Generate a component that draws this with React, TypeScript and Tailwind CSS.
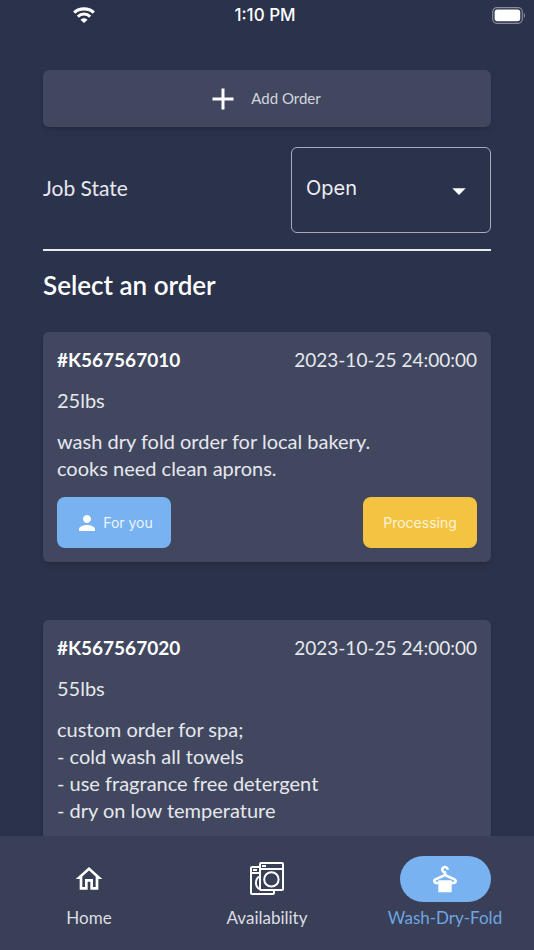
import { useState } from 'react'
import type { ReactNode } from 'react'
import { MdAdd, MdArrowDropDown, MdDryCleaning, MdOutlineHome, MdPerson } from 'react-icons/md'

interface Order {
  id: string
  date: string
  weight: string
  notes: string
  status?: string
}

const ORDERS: Order[] = [
  {
    id: '#K567567010',
    date: '2023-10-25 24:00:00',
    weight: '25lbs',
    notes: 'wash dry fold order for local bakery.\ncooks need clean aprons.',
    status: 'Processing',
  },
  {
    id: '#K567567020',
    date: '2023-10-25 24:00:00',
    weight: '55lbs',
    notes:
      'custom order for spa;\n- cold wash all towels\n- use fragrance free detergent\n- dry on low temperature',
  },
]

function WifiIcon() {
  return (
    <svg width="22" height="16" viewBox="0 0 22 16" fill="none" stroke="white" aria-hidden="true">
      <path d="M1.2 5.6C6.6 .6 15.4 .6 20.8 5.6" strokeWidth="3.2" />
      <path d="M4.8 9.6C8.4 6.2 13.6 6.2 17.2 9.6" strokeWidth="3" />
      <path d="M11 16 7.4 12.8C9.4 10.6 12.6 10.6 14.6 12.8Z" fill="white" stroke="none" />
    </svg>
  )
}

function BatteryIcon() {
  return (
    <svg width="34" height="17" viewBox="0 0 34 17" fill="none" aria-hidden="true">
      <rect x=".7" y=".7" width="29.6" height="15.6" rx="4.2" stroke="#888c9c" strokeWidth="1.2" />
      <rect x="2.6" y="2.6" width="25.6" height="11.6" rx="2.6" fill="white" />
      <path d="M31.8 6v5c1.6-.5 1.6-4.5 0-5Z" fill="#888c9c" />
    </svg>
  )
}

/** Two overlapping front-loading washers */
function WashersIcon() {
  return (
    <svg width="36" height="36" viewBox="0 0 36 36" fill="none" stroke="white" strokeWidth="2" aria-hidden="true">
      <path d="M10.5 6H3Q2 6 2 7V32Q2 33 3 33H24Q25 33 25 32V29.6" />
      <path d="M2 12H10.5M4 9H8" />
      <path d="M11 15.4C5.6 17.4 5.6 26.2 11 28.2" />
      <rect x="11" y="2" width="23" height="27" rx="1" />
      <path d="M11 8H34M13 5H17" />
      <circle cx="22.4" cy="18.4" r="7.2" />
    </svg>
  )
}

function OrderCard({ order }: { order: Order }) {
  return (
    <article className="flex flex-col gap-3.5 rounded-md bg-[#41475f] p-3.5 text-xl leading-[27px] text-[#e6e8ed] shadow-md">
      <div className="flex justify-between text-[19px]">
        <h3 className="font-bold text-white">{order.id}</h3>
        <time>{order.date}</time>
      </div>
      <p>{order.weight}</p>
      <p className="pb-px whitespace-pre-line">{order.notes}</p>
      {order.status && (
        <div className="flex justify-between font-['Inter',sans-serif] text-sm">
          <button className="flex h-[51px] w-[114px] items-center justify-center gap-1 rounded-lg bg-[#78b2f1] text-[#edf5fd]">
            <MdPerson className="size-6 text-white" />
            For you
          </button>
          <button className="h-[51px] w-[114px] rounded-lg bg-[#f5c342] text-[#fdf3d8]">{order.status}</button>
        </div>
      )}
    </article>
  )
}

interface NavItemProps {
  label: string
  icon: ReactNode
  active?: boolean
}

function NavItem({ label, icon, active = false }: NavItemProps) {
  return (
    <a
      href="#"
      aria-current={active ? 'page' : undefined}
      className={`flex flex-1 flex-col items-center gap-1 ${active ? 'text-[#6fa5e0]' : 'text-[#dcdee4]'}`}
    >
      <span
        className={`flex h-[46px] w-[91px] items-center justify-center rounded-full text-white ${active ? 'bg-[#78b2f1]' : ''}`}
      >
        {icon}
      </span>
      <span className="text-[17px] leading-6">{label}</span>
    </a>
  )
}

export default function App() {
  const [jobState, setJobState] = useState('Open')

  return (
    <div className="flex h-screen flex-col bg-[#2b324b] font-['Lato',sans-serif] text-white">
      {/* Status bar */}
      <header className="grid h-[30px] shrink-0 grid-cols-3 items-center pr-2">
        <div className="pl-[73px]">
          <WifiIcon />
        </div>
        <span className="pl-1 text-center font-['Inter',sans-serif] text-[17px] leading-7 font-medium">1:10 PM</span>
        <div className="flex justify-end">
          <BatteryIcon />
        </div>
      </header>

      <main className="min-h-0 flex-1 overflow-y-auto px-[43px] pt-10 pb-10 [scrollbar-width:none]">
        <button className="flex h-[57px] w-full items-center justify-center gap-2.5 rounded-md bg-[#41475f] pr-2 text-[15px] text-[#d3d6de] shadow-md">
          <MdAdd className="size-9 text-white" />
          Add Order
        </button>

        <div className="mt-5 flex items-center justify-between border-b-2 border-[#e9eaee] pb-4">
          <label htmlFor="job-state" className="pb-1 text-[21px] text-[#e6e8ed]">
            Job State
          </label>
          <div className="relative">
            <select
              id="job-state"
              value={jobState}
              onChange={(e) => setJobState(e.target.value)}
              className="h-[86px] w-[200px] appearance-none rounded-md border border-[#a9acb8] bg-transparent px-3.5 pb-1 font-['Inter',sans-serif] text-xl text-[#eeeff3]"
            >
              <option>Open</option>
              <option>Closed</option>
            </select>
            <MdArrowDropDown className="pointer-events-none absolute top-7 right-4 size-8" />
          </div>
        </div>

        <h2 className="mt-4 text-[26px] leading-9 font-semibold">Select an order</h2>

        <div className="mt-[29px] flex flex-col gap-[58px]">
          {ORDERS.map((order) => (
            <OrderCard key={order.id} order={order} />
          ))}
        </div>
      </main>

      <nav className="flex h-[114px] shrink-0 bg-[#393f57] pt-5">
        <NavItem label="Home" icon={<MdOutlineHome className="size-8" />} />
        <NavItem label="Availability" icon={<WashersIcon />} />
        <NavItem label="Wash-Dry-Fold" icon={<MdDryCleaning className="size-8" />} active />
      </nav>
    </div>
  )
}
